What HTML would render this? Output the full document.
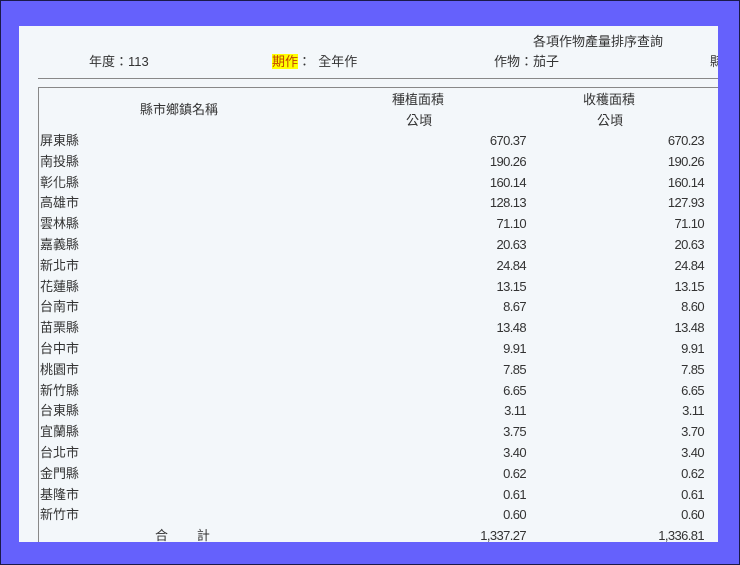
<!DOCTYPE html>
<html><head><meta charset="utf-8"><style>
html,body{margin:0;padding:0;}
body{width:740px;height:565px;background:#6561fc;position:relative;overflow:hidden;box-shadow:inset 0 0 0 1px #1a1a4a;font-family:"Liberation Sans","Noto Sans CJK TC",sans-serif;font-size:13px;color:#333;}
#p{position:absolute;left:19px;top:26px;width:699px;height:516px;background:#f3f7fa;overflow:hidden;}
.t{position:absolute;white-space:nowrap;line-height:16px;}
.r{text-align:right;letter-spacing:-0.6px;}
</style></head><body>
<div id="p">
<div class="t" style="left:514px;top:8px">各項作物產量排序查詢</div>
<div class="t" style="left:70px;top:28px">年度：113</div>
<div class="t" style="left:253px;top:28px"><span style="background:#ffff00;color:#c04000">期作</span>：&nbsp;&nbsp;全年作</div>
<div class="t" style="left:475px;top:28px">作物：茄子</div>
<div class="t" style="left:691px;top:28px">縣</div>
<div style="position:absolute;left:19px;top:52px;width:680px;height:1px;background:#888"></div>
<div style="position:absolute;left:19px;top:61px;width:680px;height:460px;border-top:1px solid #888;border-left:1px solid #888"></div>
<div class="t" style="left:121px;top:76px">縣市鄉鎮名稱</div>
<div class="t" style="left:373px;top:66px">種植面積</div>
<div class="t" style="left:387px;top:87px">公頃</div>
<div class="t" style="left:564px;top:66px">收穫面積</div>
<div class="t" style="left:578px;top:87px">公頃</div>
<div id="rows"></div>
</div>
<script>
var d=[["屏東縣","670.37","670.23"],["南投縣","190.26","190.26"],["彰化縣","160.14","160.14"],["高雄市","128.13","127.93"],["雲林縣","71.10","71.10"],["嘉義縣","20.63","20.63"],["新北市","24.84","24.84"],["花蓮縣","13.15","13.15"],["台南市","8.67","8.60"],["苗栗縣","13.48","13.48"],["台中市","9.91","9.91"],["桃園市","7.85","7.85"],["新竹縣","6.65","6.65"],["台東縣","3.11","3.11"],["宜蘭縣","3.75","3.70"],["台北市","3.40","3.40"],["金門縣","0.62","0.62"],["基隆市","0.61","0.61"],["新竹市","0.60","0.60"]];
var h="";
for(var i=0;i<d.length;i++){var y=107+i*20.8;
h+='<div class="t" style="left:21px;top:'+y+'px">'+d[i][0]+'</div>';
h+='<div class="t r" style="right:192px;top:'+y+'px">'+d[i][1]+'</div>';
h+='<div class="t r" style="right:14px;top:'+y+'px">'+d[i][2]+'</div>';}
var y=107+19*20.8;
h+='<div class="t" style="left:136px;top:'+y+'px">合&nbsp;&nbsp;&nbsp;&nbsp;&nbsp;&nbsp;&nbsp;&nbsp;計</div>';
h+='<div class="t r" style="right:192px;top:'+y+'px">1,337.27</div>';
h+='<div class="t r" style="right:14px;top:'+y+'px">1,336.81</div>';
document.getElementById("rows").innerHTML=h;
</script>
</body></html>
